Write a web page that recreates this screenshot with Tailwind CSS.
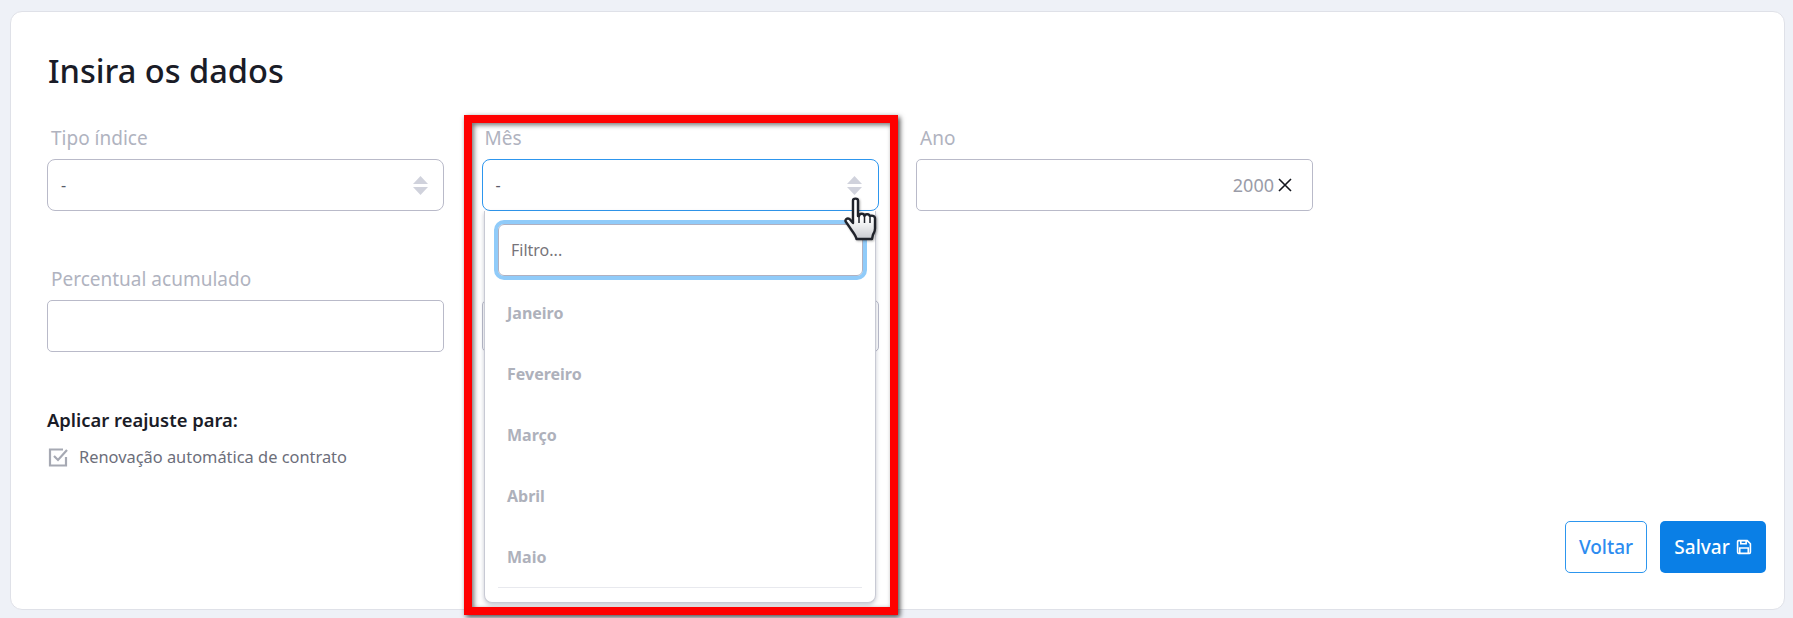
<!DOCTYPE html>
<html lang="pt-BR"><head><meta charset="utf-8">
<script src="https://cdn.jsdelivr.net/npm/@tailwindcss/browser@4"></script>
<title>Insira os dados</title></head>
<body class="relative h-[618px] w-[1793px] overflow-hidden bg-[#eef1f7] font-['Noto_Sans',sans-serif]">
<main class="absolute left-[10px] top-[11px] flex h-[599px] w-[1775px] flex-col rounded-[12px] border border-[#dfe1e8] bg-white pl-[36px] pr-[18px] pb-[36px]">
  <h1 class="mt-[38px] h-[42px] pl-[1px] text-[32.6px] leading-[42px] font-medium text-[#1a1c27]">Insira os dados</h1>
  <div class="mt-[27px] grid grid-cols-[397px_397px_397px] gap-x-[37.5px] gap-y-[49px]">
    <div>
      <label class="block h-[40px] pl-[4px] pt-[7px] text-[19px] leading-[24px] text-[#b0b3bf]">Tipo índice</label>
      <div class="flex h-[52px] items-center justify-between rounded-[8px] border border-[#b9bac9] pl-[13px] pr-[15px] text-[16px] text-[#5a5c68]">
        <span>-</span>
        <svg width="15" height="19" viewBox="0 0 15 19" fill="#d0d2dc"><path d="M7.5 0 15 8H0z"/><path d="M0 11h15l-7.500 8z"/></svg>
      </div>
    </div>
    <div>
      <label class="block h-[40px] pl-[3px] pt-[7px] text-[19px] leading-[24px] text-[#b0b3bf]">Mês</label>
      <div class="flex h-[52px] items-center justify-between rounded-[8px] border border-[#2d96ee] pl-[13px] pr-[16px] text-[16px] text-[#5a5c68]">
        <span>-</span>
        <svg width="15" height="19" viewBox="0 0 15 19" fill="#d0d2dc"><path d="M7.5 0 15 8H0z"/><path d="M0 11h15l-7.500 8z"/></svg>
      </div>
    </div>
    <div>
      <label class="block h-[40px] pl-[4px] pt-[7px] text-[19px] leading-[24px] text-[#b0b3bf]">Ano</label>
      <div class="flex h-[52px] items-center justify-end gap-[4px] rounded-[5px] border border-[#b9bac9] pr-[20px] text-[18px] text-[#9a9ca8]">
        <span>2000</span>
        <svg width="14" height="14" viewBox="0 0 14 14" fill="none" stroke="#15171f" stroke-width="1.600"><path d="M1 1l12 12M13 1 1 13"/></svg>
      </div>
    </div>
    <div>
      <label class="block h-[40px] pl-[4px] pt-[7px] text-[19px] leading-[24px] text-[#b0b3bf]">Percentual acumulado</label>
      <div class="h-[52px] rounded-[5px] border border-[#b9bac9]"></div>
    </div>
    <div>
      <div class="mt-[40px] h-[52px] rounded-[5px] border border-[#b9bac9]"></div>
    </div>
  </div>
  <h2 class="mt-[55px] h-[26px] text-[18.4px] leading-[26px] font-semibold text-[#1a1c27]">Aplicar reajuste para:</h2>
  <div class="mt-[12px] flex h-[24px] items-center gap-[10px] pl-[1px] text-[16.4px] text-[#6c6e7a]">
    <svg width="21" height="20" viewBox="0 0 21 20" fill="none" stroke="#a6a9b3" stroke-width="2.200"><path d="M18 10v8.500H2V2.500h13"/><path d="M6 9l4 4 9-10"/></svg>
    <span>Renovação automática de contrato</span>
  </div>
  <div class="mt-auto flex justify-end gap-[13px]">
    <button class="h-[52px] w-[82px] rounded-[5px] border border-[#2d96ee] bg-white text-[19px] font-medium text-[#2d8cf0]">Voltar</button>
    <button class="flex h-[52px] w-[106px] items-center justify-center gap-[6px] rounded-[5px] bg-[#0a7fe6] text-[19px] font-medium text-white">Salvar
      <svg width="16" height="16" viewBox="0 0 15 15" fill="none" stroke="white" stroke-width="1.500"><path d="M1.500 2.500a1 1 0 0 1 1-1h8l3 3v8a1 1 0 0 1-1 1h-10a1 1 0 0 1-1-1z"/><path d="M4.500 1.500v3h5v-3M3.500 13.500v-5h8v5"/></svg>
    </button>
  </div>
</main>

<div class="absolute left-[484px] top-[211px] h-[392px] w-[392px] rounded-b-[8px] border border-t-0 border-[#c8cad4] bg-white shadow-[0_2px_4px_rgba(90,95,120,0.35)]">
  <div class="ml-[13px] mr-[12px] mt-[13px] flex h-[52px] items-center rounded-[6px] border border-[#b0b0c0] pl-[12px] text-[16px] text-[#77747a] outline-[4px] outline-[#90cbf9]">Filtro...</div>
  <ul class="mt-[6px] text-[16px] font-bold text-[#aeb1bb]">
    <li class="flex h-[61px] items-center pl-[22px]">Janeiro</li>
    <li class="flex h-[61px] items-center pl-[22px]">Fevereiro</li>
    <li class="flex h-[61px] items-center pl-[22px]">Março</li>
    <li class="flex h-[61px] items-center pl-[22px]">Abril</li>
    <li class="flex h-[61px] items-center pl-[22px]">Maio</li>
  </ul>
  <div class="mx-[13px] h-px bg-[#e8e9ee]"></div>
</div>

<div class="pointer-events-none absolute left-[464px] top-[115px] h-[500px] w-[434px] border-[8px] border-[#ff0000] shadow-[2px_2px_5px_rgba(0,0,0,0.7),inset_2px_2px_5px_rgba(0,0,0,0.55)]"></div>

<svg class="absolute left-[843px] top-[197px]" width="36" height="48" viewBox="0 0 36 48">
  <defs><linearGradient id="h" x1="0" y1="0" x2="0" y2="1"><stop offset="0.500" stop-color="#ffffff"/><stop offset="1" stop-color="#c9cbd0"/></linearGradient></defs>
  <path d="M10 3.500c0-2.500 5-2.500 5 0V19l1 0c.5-3 5-3 5.500 0 .5-2.500 5-2.500 5.500.5 1-1.500 5-1 5 2v10c0 3-1 4-2 6l-1 4.500H13.500c-.5-3-3-6-5-9-2-3-4-6-5.500-8-1.500-2 1-4.500 3.500-3L10 26z" fill="url(#h)" stroke="#20232b" stroke-width="2.400" stroke-linejoin="round" filter="drop-shadow(1px 1px 1px rgba(0,0,0,.3))"/>
  <path d="M16 19v7M21.500 19.500v6.500M27 20.500v5.500" stroke="#20232b" stroke-width="1.500" fill="none"/>
</svg>
</body></html>
